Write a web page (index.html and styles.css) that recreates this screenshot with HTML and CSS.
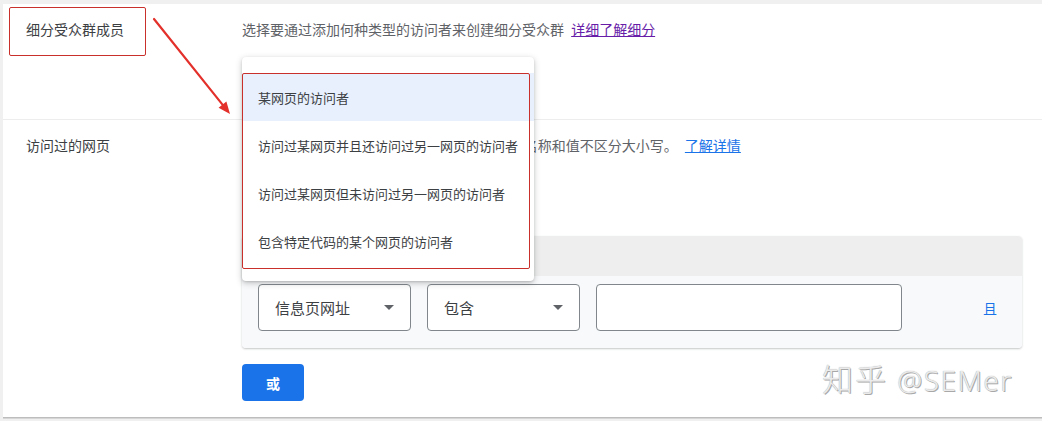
FILE: index.html
```html
<!DOCTYPE html>
<html lang="zh-CN">
<head>
<meta charset="utf-8">
<title>细分受众群</title>
<link rel="stylesheet" href="styles.css">
</head>
<body>
<div class="card">
  <div class="row row-1">
    <div class="label">细分受众群成员</div>
    <div class="content">
      <p class="desc">选择要通过添加何种类型的访问者来创建细分受众群 <a class="link visited" href="#">详细了解细分</a></p>
    </div>
  </div>
  <div class="row row-2">
    <div class="label">访问过的网页</div>
    <div class="content">
      <p class="desc">指定访问者访问过的网页。URL 和查询参数的名称和值不区分大小写。 <a class="link" href="#">了解详情</a></p>
      <div class="filter">
        <div class="filter-head"></div>
        <div class="filter-body">
          <div class="select"><span>信息页网址</span><i class="caret"></i></div>
          <div class="select"><span>包含</span><i class="caret"></i></div>
          <div class="input"></div>
          <span class="and">且</span>
        </div>
      </div>
      <button class="or">或</button>
    </div>
  </div>

  <div class="menu">
    <div class="item active">某网页的访问者</div>
    <div class="item">访问过某网页并且还访问过另一网页的访问者</div>
    <div class="item">访问过某网页但未访问过另一网页的访问者</div>
    <div class="item">包含特定代码的某个网页的访问者</div>
  </div>

  <div class="annot annot-label"></div>
  <div class="annot annot-menu"></div>

  <svg class="arrow" width="300" height="130" viewBox="0 0 300 130">
    <line x1="151" y1="15" x2="219.5" y2="100.6" stroke="#e3302a" stroke-width="2.2" stroke-linecap="round"/>
    <polygon points="227,110 215.6,103.7 223.4,97.5" fill="#e3302a"/>
  </svg>

  <div class="watermark"><span class="wm-cjk">知乎</span> <span class="wm-latin">@SEMer</span></div>
</div>
</body>
</html>
```

FILE: styles.css
```css
html, body {
  margin: 0;
  padding: 0;
  background: #f0f0f0;
  height: 100%;
  overflow: hidden;
}

body {
  font-family: "Noto Sans CJK SC", "Noto Sans", sans-serif;
  color: #3c4043;
}

.card {
  position: relative;
  margin: 4px 0 0 3px;
  height: 413px;
  background: #ffffff;
  box-shadow: 0 1px 0 #bdbdbd, 0 2px 0 #d6d6d6;
}

.row {
  display: flex;
  padding-left: 23px;
}

.row-1 {
  height: 116px;
  padding-top: 15px;
  box-sizing: border-box;
  border-bottom: 1px solid #ededed;
}

.row-2 {
  padding-top: 15px;
}

.label {
  width: 216px;
  flex: none;
  font-size: 14px;
  line-height: 20px;
  color: #3c4043;
}

.content {
  flex: 1;
  min-width: 0;
}

.desc {
  margin: 0;
  font-size: 14px;
  line-height: 20px;
  color: #5f6368;
  white-space: nowrap;
}

.desc .link {
  margin-left: 4px;
}

.link {
  color: #1a73e8;
  text-decoration: underline;
}

.link.visited {
  color: #681da8;
}

.filter {
  margin-top: 81px;
  width: 780px;
  border-radius: 4px;
  overflow: hidden;
  box-shadow: 0 1px 2px rgba(60, 64, 67, 0.3);
}

.filter-head {
  height: 40px;
  background: #eeeeee;
}

.filter-body {
  display: flex;
  align-items: center;
  gap: 16px;
  padding: 8px 25px 17px 16px;
  background: #f8f9fa;
}

.select {
  width: 153px;
  height: 47px;
  box-sizing: border-box;
  border: 1px solid #80868b;
  border-radius: 4px;
  background: #ffffff;
  display: flex;
  align-items: center;
  justify-content: space-between;
  padding: 0 16px 0 16px;
  font-size: 15px;
  color: #3c4043;
}

.caret {
  width: 0;
  height: 0;
  border-left: 5px solid transparent;
  border-right: 5px solid transparent;
  border-top: 5px solid #5f6368;
}

.input {
  width: 306px;
  height: 47px;
  box-sizing: border-box;
  border: 1px solid #80868b;
  border-radius: 4px;
  background: #ffffff;
}

.and {
  margin-left: auto;
  font-size: 14px;
  color: #1a73e8;
}

.or {
  margin-top: 16px;
  width: 62px;
  height: 37px;
  border: none;
  border-radius: 4px;
  background: #1a73e8;
  color: #ffffff;
  font-family: "Noto Sans CJK SC", sans-serif;
  font-size: 14px;
  font-weight: 700;
  padding: 0;
}

.menu {
  position: absolute;
  left: 239px;
  top: 53px;
  width: 292px;
  padding: 16px 0;
  background: #ffffff;
  border-radius: 4px;
  box-shadow: 0 2px 6px rgba(60, 64, 67, 0.3), 0 1px 2px rgba(60, 64, 67, 0.15);
}

.item {
  height: 48px;
  display: flex;
  align-items: center;
  padding-left: 16px;
  font-size: 13px;
  color: #3c4043;
  white-space: nowrap;
}

.item.active {
  background: #e8f0fe;
}

.annot {
  position: absolute;
  border: 1px solid #c9302c;
  border-radius: 2px;
  box-sizing: border-box;
}

.annot-label {
  left: 6px;
  top: 3px;
  width: 137px;
  height: 49px;
}

.annot-menu {
  left: 239px;
  top: 69px;
  width: 288px;
  height: 196px;
}

.arrow {
  position: absolute;
  left: 0;
  top: 0;
}

.watermark {
  position: absolute;
  left: 819px;
  top: 356px;
  font-family: "Noto Sans", "Noto Sans CJK SC", sans-serif;
  font-size: 28px;
  font-weight: 300;
  line-height: 36px;
  color: #ebebeb;
  text-shadow: 1px 1px 0 #a8a8a8, 0 0 1px #9a9a9a;
  white-space: nowrap;
}

.wm-cjk {
  font-family: "Noto Sans CJK SC", sans-serif;
  font-size: 31px;
  letter-spacing: 2px;
  margin-right: 2px;
}

.wm-latin {
  letter-spacing: 1.5px;
}
```
